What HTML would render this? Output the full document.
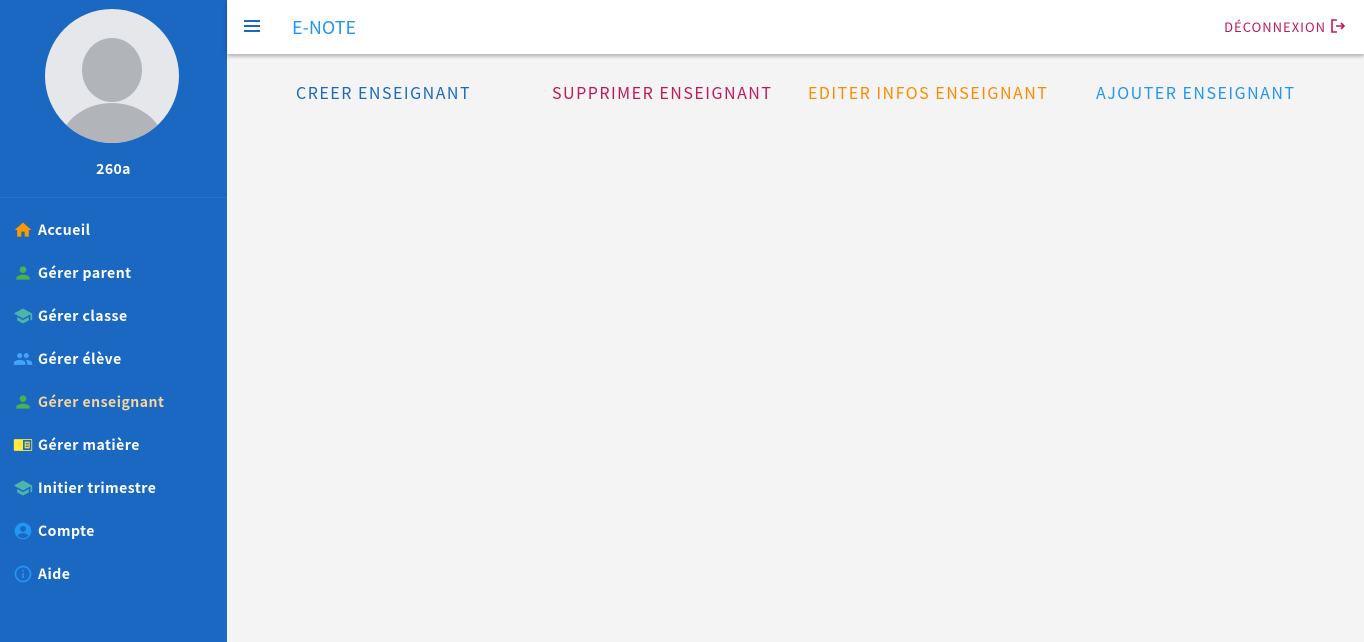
<!DOCTYPE html>
<html><head><meta charset="utf-8"><style>
*{margin:0;padding:0;box-sizing:border-box}
body{width:1364px;height:642px;overflow:hidden;background:#f4f4f4;font-family:"Noto Sans CJK SC","DejaVu Sans","Liberation Sans",sans-serif;position:relative}
.side{position:absolute;left:0;top:0;width:227px;height:642px;background:#1a68c2}
.avatar{position:absolute;left:45px;top:9px;width:134px;height:134px;border-radius:50%;background:#e5e7ea;overflow:hidden}
.avatar .h{position:absolute;left:37px;top:29px;width:60px;height:64px;border-radius:50%;background:#b1b5ba}
.avatar .b{position:absolute;left:14px;top:94px;width:106px;height:90px;border-radius:50%;background:#b1b5ba}
.name{position:absolute;top:159px;width:227px;text-align:center;color:#fff;font-weight:bold;font-size:14px;letter-spacing:.4px}
.sep{position:absolute;top:197px;left:0;width:227px;height:1px;background:#2a72c8}
.item{position:absolute;left:13px;height:20px;display:flex;align-items:center;color:#fff;font-weight:bold;font-size:14px;letter-spacing:.5px}
.item svg{width:20px;height:20px;margin-right:5px}
.top{position:absolute;left:227px;top:0;width:1137px;height:54px;background:#fff;box-shadow:0 2px 4px rgba(0,0,0,.3)}
.tab{position:absolute;top:80px;font-size:16px;letter-spacing:1.5px}
</style></head><body>
<div class="side">
<div class="avatar"><div class="h"></div><div class="b"></div></div>
<div class="name">260a</div>
<div class="sep"></div>
<div class="item" style="top:220px"><svg viewBox="0 0 24 24"><path fill="#ff9800" d="M10 20v-6h4v6h5v-8h3L12 3 2 12h3v8z"/></svg>Accueil</div>
<div class="item" style="top:263px"><svg viewBox="0 0 24 24"><path fill="#4caf50" d="M12 12c2.2 0 4-1.8 4-4s-1.8-4-4-4-4 1.8-4 4 1.8 4 4 4zm0 2c-2.7 0-8 1.3-8 4v2h16v-2c0-2.7-5.3-4-8-4z"/></svg>Gérer parent</div>
<div class="item" style="top:306px"><svg viewBox="0 0 24 24"><path fill="#4db6ac" d="M5 13.2v4L12 21l7-3.8v-4L12 17l-7-3.8zM12 3L1 9l11 6 9-4.9V17h2V9L12 3z"/></svg>Gérer classe</div>
<div class="item" style="top:349px"><svg viewBox="0 0 24 24"><path fill="#42a5f5" d="M16 11c1.7 0 3-1.3 3-3s-1.3-3-3-3-3 1.3-3 3 1.3 3 3 3zm-8 0c1.7 0 3-1.3 3-3S9.7 5 8 5 5 6.3 5 8s1.3 3 3 3zm0 2c-2.3 0-7 1.200-7 3.5V19h14v-2.5C15 14.2 10.3 13 8 13zm8 0c-.3 0-.6 0-1 .1 1.2.8 2 2 2 3.4V19h6v-2.5c0-2.3-4.7-3.5-7-3.5z"/></svg>Gérer élève</div>
<div class="item" style="top:392px;color:#f5d5a0"><svg viewBox="0 0 24 24"><path fill="#4caf50" d="M12 12c2.2 0 4-1.8 4-4s-1.8-4-4-4-4 1.8-4 4 1.8 4 4 4zm0 2c-2.7 0-8 1.3-8 4v2h16v-2c0-2.7-5.3-4-8-4z"/></svg>Gérer enseignant</div>
<div class="item" style="top:435px"><svg viewBox="0 0 24 24"><rect x="1" y="5" width="22" height="14" rx="1" fill="#ffeb3b"/><rect x="12" y="6" width="10" height="12" fill="#1a68c2"/><rect x="14" y="8" width="6" height="8" fill="#ffeb3b"/><path d="M15 10h4M15 12h4M15 14h4" stroke="#1a68c2" stroke-width="1"/></svg>Gérer matière</div>
<div class="item" style="top:478px"><svg viewBox="0 0 24 24"><path fill="#4db6ac" d="M5 13.2v4L12 21l7-3.8v-4L12 17l-7-3.8zM12 3L1 9l11 6 9-4.9V17h2V9L12 3z"/></svg>Initier trimestre</div>
<div class="item" style="top:521px"><svg viewBox="0 0 24 24"><circle cx="12" cy="12" r="10" fill="#2196f3"/><circle cx="12" cy="9.5" r="3.5" fill="#1a68c2"/><path d="M5.5 17.5c1.5-2 4-3 6.5-3s5 1 6.5 3c-1.8 2-4 3-6.5 3s-4.7-1-6.5-3z" fill="#1a68c2"/></svg>Compte</div>
<div class="item" style="top:564px"><svg viewBox="0 0 24 24"><circle cx="12" cy="12" r="9" fill="none" stroke="#2196f3" stroke-width="2"/><path d="M12 11v6M12 7v2" stroke="#2196f3" stroke-width="2"/></svg>Aide</div>
</div>
<div class="top">
<svg style="position:absolute;left:16px;top:17px" width="18" height="18" viewBox="0 0 18 18"><path d="M1 4h16M1 9h16M1 14h16" stroke="#1a68c2" stroke-width="2"/></svg>
<div style="position:absolute;left:65px;top:14px;font-size:18px;color:#2196f3">E-NOTE</div>
<div style="position:absolute;right:38px;top:17px;font-size:13px;letter-spacing:1px;color:#c2185b">DÉCONNEXION</div>
<svg style="position:absolute;right:18px;top:18px" width="16" height="16" viewBox="0 0 16 16"><path d="M7 2H2v12h5M6 8h8M11 5l3 3-3 3" fill="none" stroke="#c2185b" stroke-width="1.6"/></svg>
</div>
<div class="tab" style="left:296px;color:#1a68c2">CREER ENSEIGNANT</div>
<div class="tab" style="left:552px;color:#c2185b">SUPPRIMER ENSEIGNANT</div>
<div class="tab" style="left:808px;color:#fb8c00">EDITER INFOS ENSEIGNANT</div>
<div class="tab" style="left:1096px;color:#2196f3">AJOUTER ENSEIGNANT</div>
</body></html>
